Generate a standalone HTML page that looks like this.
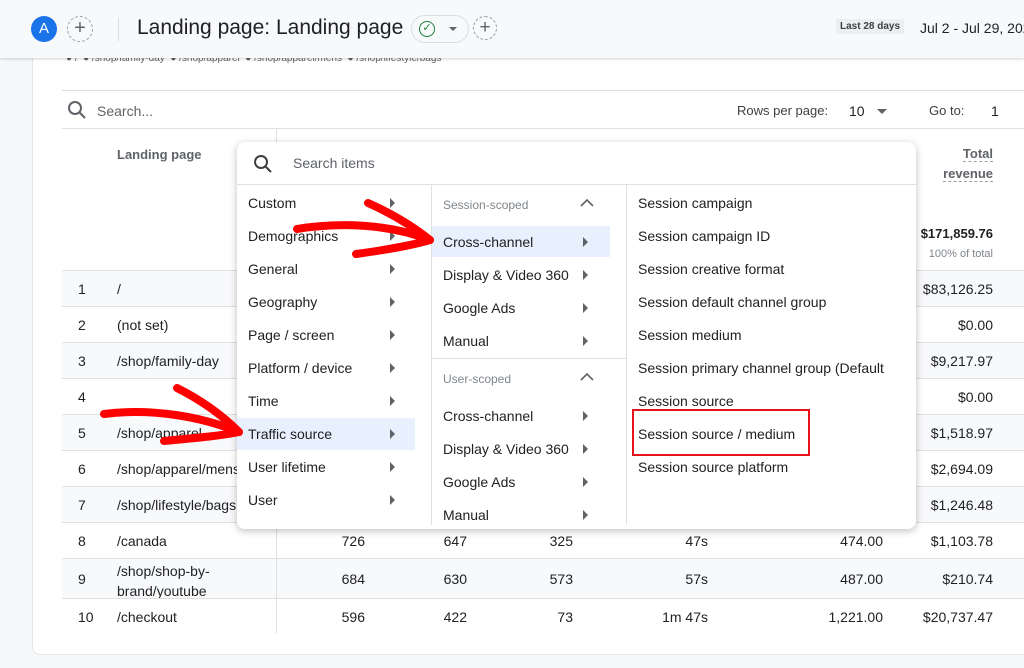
<!DOCTYPE html>
<html><head><meta charset="utf-8"><style>
*{margin:0;padding:0;box-sizing:border-box}
body{width:1024px;height:668px;overflow:hidden;background:#f6f7f9;font-family:"Liberation Sans",sans-serif;color:#3c4043;position:relative}
.a{position:absolute;white-space:nowrap}
.hdr{position:absolute;left:0;top:0;width:1024px;height:58px;background:#f8f9fa;box-shadow:0 1px 3px rgba(0,0,0,.18);z-index:3}
.card{position:absolute;left:32px;top:40px;width:1010px;height:615px;background:#fff;border:1px solid #e3e5e8;border-radius:8px}
.row{position:absolute;left:62px;width:962px;border-top:1px solid #e0e0e0;font-size:14px;color:#202124}
.row.s{background:#f8f9fa}
.menu{position:absolute;left:237px;top:142px;width:679px;height:387px;background:#fff;border-radius:8px;box-shadow:0 2px 8px rgba(0,0,0,.25);z-index:5;font-size:14px;color:#202124}
.mi{position:absolute;height:33px;line-height:35px}
.tri{position:absolute;width:0;height:0;border-left:5px solid #5f6368;border-top:5px solid transparent;border-bottom:5px solid transparent}
.r{text-align:right}
</style></head><body>
<div class="card"></div>
<div class="hdr">
 <div class="a" style="left:31px;top:16px;width:26px;height:26px;border-radius:50%;background:#1a73e8;color:#fff;font-size:15px;text-align:center;line-height:26px">A</div>
 <div class="a" style="left:67px;top:16px;width:26px;height:26px;border-radius:50%;border:1px dashed #9aa0a6;color:#5f6368;font-size:20px;text-align:center;line-height:23px">+</div>
 <div class="a" style="left:118px;top:17px;width:1px;height:24px;background:#dadce0"></div>
 <div class="a" style="left:137px;top:16px;font-size:21px;color:#202124">Landing page: Landing page</div>
 <div class="a" style="left:411px;top:15px;width:58px;height:28px;border-radius:14px;border:1px solid #dadce0"></div>
 <div class="a" style="left:419px;top:21px;width:16px;height:16px;border-radius:50%;border:1.5px solid #188038;color:#188038;font-size:11px;text-align:center;line-height:13px">✓</div>
 <div class="a" style="left:449px;top:27px;border-left:4px solid transparent;border-right:4px solid transparent;border-top:4px solid #5f6368"></div>
 <div class="a" style="left:473px;top:16px;width:24px;height:24px;border-radius:50%;border:1px dashed #9aa0a6;color:#5f6368;font-size:19px;text-align:center;line-height:21px">+</div>
 <div class="a" style="left:836px;top:19px;padding:2px 4px;background:#eceef0;font-size:10px;color:#3c4043;font-weight:bold">Last 28 days</div>
 <div class="a" style="left:920px;top:20px;font-size:14px;color:#202124">Jul 2 - Jul 29, 202</div>
</div>
<div class="a" style="left:66px;top:53px;font-size:10px;color:#5f6368;z-index:2">● / &nbsp;● /shop/family-day &nbsp;● /shop/apparel &nbsp;● /shop/apparel/mens &nbsp;● /shop/lifestyle/bags</div>
<div class="a" style="left:62px;top:90px;width:962px;height:1px;background:#dadce0"></div>
<svg class="a" style="left:67px;top:100px" width="20" height="20"><circle cx="8" cy="8" r="6" fill="none" stroke="#5f6368" stroke-width="2"/><path d="M12.5 12.5L18 18" stroke="#5f6368" stroke-width="2"/></svg>
<div class="a" style="left:97px;top:103px;font-size:14px;color:#5f6368">Search...</div>
<div class="a" style="left:737px;top:103px;font-size:13px;color:#3c4043">Rows per page:</div>
<div class="a" style="left:849px;top:103px;font-size:14px;color:#202124">10</div>
<div class="a" style="left:877px;top:109px;border-left:5px solid transparent;border-right:5px solid transparent;border-top:5px solid #5f6368"></div>
<div class="a" style="left:929px;top:103px;font-size:13px;color:#3c4043">Go to:</div>
<div class="a" style="left:991px;top:103px;font-size:14px;color:#202124">1</div>
<div class="a" style="left:62px;top:128px;width:962px;height:1px;background:#e0e0e0"></div>
<div class="a" style="left:276px;top:128px;width:1px;height:506px;background:#e0e0e0;z-index:1"></div>
<div class="a" style="left:117px;top:147px;font-size:13px;color:#5f6368;font-weight:bold">Landing page</div>
<div class="a r" style="left:930px;top:144px;width:63px;font-size:13px;color:#5f6368;font-weight:bold;line-height:20px"><span style="border-bottom:1px dashed #9aa0a6">Total</span><br><span style="border-bottom:1px dashed #9aa0a6">revenue</span></div>
<div class="a r" style="left:900px;top:226px;width:93px;font-size:13px;font-weight:bold;color:#202124">$171,859.76</div>
<div class="a r" style="left:900px;top:248px;width:93px;font-size:11px;color:#80868b">100% of total</div>

<div class="row s" style="top:270px;height:36px"><span class="a" style="left:16px;top:10px">1</span><span class="a" style="left:55px;top:10px">/</span><span class="a r" style="right:31px;top:10px">$83,126.25</span></div>
<div class="row" style="top:306px;height:36px"><span class="a" style="left:16px;top:10px">2</span><span class="a" style="left:55px;top:10px">(not set)</span><span class="a r" style="right:31px;top:10px">$0.00</span></div>
<div class="row s" style="top:342px;height:36px"><span class="a" style="left:16px;top:10px">3</span><span class="a" style="left:55px;top:10px">/shop/family-day</span><span class="a r" style="right:31px;top:10px">$9,217.97</span></div>
<div class="row" style="top:378px;height:36px"><span class="a" style="left:16px;top:10px">4</span><span class="a r" style="right:31px;top:10px">$0.00</span></div>
<div class="row s" style="top:414px;height:36px"><span class="a" style="left:16px;top:10px">5</span><span class="a" style="left:55px;top:10px">/shop/apparel</span><span class="a r" style="right:31px;top:10px">$1,518.97</span></div>
<div class="row" style="top:450px;height:36px"><span class="a" style="left:16px;top:10px">6</span><span class="a" style="left:55px;top:10px">/shop/apparel/mens</span><span class="a r" style="right:31px;top:10px">$2,694.09</span></div>
<div class="row s" style="top:486px;height:36px"><span class="a" style="left:16px;top:10px">7</span><span class="a" style="left:55px;top:10px">/shop/lifestyle/bags</span><span class="a r" style="right:31px;top:10px">$1,246.48</span></div>
<div class="row" style="top:522px;height:36px"><span class="a" style="left:16px;top:10px">8</span><span class="a" style="left:55px;top:10px">/canada</span><span class="a r" style="right:659px;top:10px">726</span><span class="a r" style="right:557px;top:10px">647</span><span class="a r" style="right:451px;top:10px">325</span><span class="a r" style="right:316px;top:10px">47s</span><span class="a r" style="right:141px;top:10px">474.00</span><span class="a r" style="right:31px;top:10px">$1,103.78</span></div>
<div class="row s" style="top:558px;height:40px"><span class="a" style="left:16px;top:12px">9</span><span class="a" style="left:55px;top:2px;line-height:20px">/shop/shop-by-<br>brand/youtube</span><span class="a r" style="right:659px;top:12px">684</span><span class="a r" style="right:557px;top:12px">630</span><span class="a r" style="right:451px;top:12px">573</span><span class="a r" style="right:316px;top:12px">57s</span><span class="a r" style="right:141px;top:12px">487.00</span><span class="a r" style="right:31px;top:12px">$210.74</span></div>
<div class="row" style="top:598px;height:36px"><span class="a" style="left:16px;top:10px">10</span><span class="a" style="left:55px;top:10px">/checkout</span><span class="a r" style="right:659px;top:10px">596</span><span class="a r" style="right:557px;top:10px">422</span><span class="a r" style="right:451px;top:10px">73</span><span class="a r" style="right:316px;top:10px">1m 47s</span><span class="a r" style="right:141px;top:10px">1,221.00</span><span class="a r" style="right:31px;top:10px">$20,737.47</span></div>

<div class="menu">
 <svg class="a" style="left:16px;top:12px" width="20" height="20"><circle cx="8" cy="8" r="6" fill="none" stroke="#3c4043" stroke-width="2"/><path d="M12.5 12.5L18 18" stroke="#3c4043" stroke-width="2"/></svg>
 <div class="a" style="left:56px;top:13px;font-size:14px;color:#5f6368">Search items</div>
 <div class="a" style="left:0;top:42px;width:679px;height:1px;background:#e0e0e0"></div>
 <div class="a" style="left:194px;top:43px;width:1px;height:340px;background:#e0e0e0"></div>
 <div class="a" style="left:389px;top:43px;width:1px;height:340px;background:#e0e0e0"></div>
 <div class="a" style="left:195px;top:216px;width:194px;height:1px;background:#e0e0e0"></div>
 <div class="a" style="left:0;top:276px;width:178px;height:32px;background:#e8f0fe"></div>
 <div class="a" style="left:195px;top:84px;width:178px;height:31px;background:#e8f0fe"></div>
 <div class="mi" style="left:11px;top:44px">Custom</div><div class="tri" style="left:153px;top:56px"></div>
 <div class="mi" style="left:11px;top:77px">Demographics</div><div class="tri" style="left:153px;top:89px"></div>
 <div class="mi" style="left:11px;top:110px">General</div><div class="tri" style="left:153px;top:122px"></div>
 <div class="mi" style="left:11px;top:143px">Geography</div><div class="tri" style="left:153px;top:155px"></div>
 <div class="mi" style="left:11px;top:176px">Page / screen</div><div class="tri" style="left:153px;top:188px"></div>
 <div class="mi" style="left:11px;top:209px">Platform / device</div><div class="tri" style="left:153px;top:221px"></div>
 <div class="mi" style="left:11px;top:242px">Time</div><div class="tri" style="left:153px;top:254px"></div>
 <div class="mi" style="left:11px;top:275px">Traffic source</div><div class="tri" style="left:153px;top:287px"></div>
 <div class="mi" style="left:11px;top:308px">User lifetime</div><div class="tri" style="left:153px;top:320px"></div>
 <div class="mi" style="left:11px;top:341px">User</div><div class="tri" style="left:153px;top:353px"></div>

 <div class="a" style="left:206px;top:56px;font-size:12px;color:#80868b">Session-scoped</div>
 <svg class="a" style="left:343px;top:56px" width="14" height="10"><path d="M1 8L7 2L13 8" fill="none" stroke="#5f6368" stroke-width="1.6"/></svg>
 <div class="mi" style="left:206px;top:83px">Cross-channel</div><div class="tri" style="left:346px;top:95px"></div>
 <div class="mi" style="left:206px;top:116px">Display &amp; Video 360</div><div class="tri" style="left:346px;top:128px"></div>
 <div class="mi" style="left:206px;top:149px">Google Ads</div><div class="tri" style="left:346px;top:161px"></div>
 <div class="mi" style="left:206px;top:182px">Manual</div><div class="tri" style="left:346px;top:194px"></div>
 <div class="a" style="left:206px;top:230px;font-size:12px;color:#80868b">User-scoped</div>
 <svg class="a" style="left:343px;top:230px" width="14" height="10"><path d="M1 8L7 2L13 8" fill="none" stroke="#5f6368" stroke-width="1.6"/></svg>
 <div class="mi" style="left:206px;top:257px">Cross-channel</div><div class="tri" style="left:346px;top:269px"></div>
 <div class="mi" style="left:206px;top:290px">Display &amp; Video 360</div><div class="tri" style="left:346px;top:302px"></div>
 <div class="mi" style="left:206px;top:323px">Google Ads</div><div class="tri" style="left:346px;top:335px"></div>
 <div class="mi" style="left:206px;top:356px">Manual</div><div class="tri" style="left:346px;top:368px"></div>

 <div class="mi" style="left:401px;top:44px">Session campaign</div>
 <div class="mi" style="left:401px;top:77px">Session campaign ID</div>
 <div class="mi" style="left:401px;top:110px">Session creative format</div>
 <div class="mi" style="left:401px;top:143px">Session default channel group</div>
 <div class="mi" style="left:401px;top:176px">Session medium</div>
 <div class="mi" style="left:401px;top:209px;width:252px;overflow:hidden">Session primary channel group (Default Channel Group)</div>
 <div class="mi" style="left:401px;top:242px">Session source</div>
 <div class="mi" style="left:401px;top:275px">Session source / medium</div>
 <div class="mi" style="left:401px;top:308px">Session source platform</div>
 <div class="a" style="left:395px;top:267px;width:178px;height:47px;border:2px solid #e8141b"></div>
</div>

<svg class="a" style="left:0;top:0;z-index:6" width="1024" height="668">
 <g fill="none" stroke="#f00" stroke-width="8" stroke-linecap="round" stroke-linejoin="round">
  <path d="M297 229C340 222 390 224 430 240"/>
  <path d="M368 203C395 215 415 228 430 240C410 246 385 250 356 254"/>
  <path d="M104 414C150 408 200 416 239 432"/>
  <path d="M177 388C205 402 225 418 239 432C220 436 195 438 164 441"/>
 </g>
</svg>
</body></html>
